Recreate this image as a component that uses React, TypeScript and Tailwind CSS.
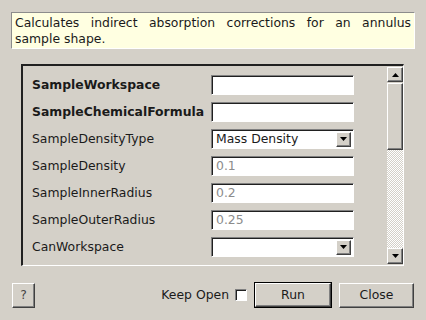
const raised =
  'border border-t-white border-l-white border-r-[#404040] border-b-[#404040] shadow-[inset_-1px_-1px_0_#808080] bg-[#d4d0c8]'
const sunken =
  'border border-t-[#808080] border-l-[#808080] border-r-white border-b-white shadow-[inset_1px_1px_0_#202020] bg-white'

type Row = {
  label: string
  bold?: boolean
  kind: 'text' | 'combo'
  value?: string
  muted?: boolean
}

const rows: Row[] = [
  { label: 'SampleWorkspace', bold: true, kind: 'text' },
  { label: 'SampleChemicalFormula', bold: true, kind: 'text' },
  { label: 'SampleDensityType', kind: 'combo', value: 'Mass Density' },
  { label: 'SampleDensity', kind: 'text', value: '0.1', muted: true },
  { label: 'SampleInnerRadius', kind: 'text', value: '0.2', muted: true },
  { label: 'SampleOuterRadius', kind: 'text', value: '0.25', muted: true },
  { label: 'CanWorkspace', kind: 'combo' },
]

function Arrow({ up }: { up?: boolean }) {
  return (
    <svg width="7" height="4" viewBox="0 0 7 4">
      <path d={up ? 'M0 4 L3.5 0 L7 4 Z' : 'M0 0 L7 0 L3.5 4 Z'} fill="#000" />
    </svg>
  )
}

function Field({ row }: { row: Row }) {
  if (row.kind === 'combo') {
    return (
      <div className={`${sunken} w-[143px] h-[20px] flex items-center pl-[4px] pr-[2px]`}>
        <span className="flex-1 leading-none">{row.value}</span>
        <div className={`${raised} w-[15px] h-[15px] flex items-center justify-center`}>
          <Arrow />
        </div>
      </div>
    )
  }
  return (
    <div className={`${sunken} w-[143px] h-[20px] flex items-center pl-[4px]`}>
      <span className={row.muted ? 'text-[#8c8c8c] leading-none' : 'leading-none'}>{row.value}</span>
    </div>
  )
}

export default function App() {
  return (
    <div
      className="w-[426px] h-[320px] bg-[#d4d0c8] pt-[12px] px-[11px] text-[12.4px] text-[#1a1a1a] overflow-hidden"
      style={{ fontFamily: '"DejaVu Sans", sans-serif' }}
    >
      <div className="h-[37px] border border-t-[#8c8c8c] border-l-[#8c8c8c] border-r-white border-b-white bg-[#ffffe1] px-[3px] pt-[2px] leading-[16px] text-justify">
        Calculates indirect absorption corrections for an annulus sample shape.
      </div>

      <div className="mt-[15px] ml-[10px] w-[383px] h-[202px] flex border-t-2 border-l-2 border-b border-r border-t-[#202020] border-l-[#202020] border-b-white border-r-white">
        <div className="flex-1 flex flex-col gap-[7px] pt-[9px] pl-[9px]">
          {rows.map((r) => (
            <div key={r.label} className="flex items-center h-[20px]">
              <span className={`w-[179px] ${r.bold ? 'font-bold' : ''}`}>{r.label}</span>
              <Field row={r} />
            </div>
          ))}
        </div>
        <div className="w-[16px] flex flex-col pt-[1px] pb-[1px]">
          <div className={`${raised} h-[15px] flex items-center justify-center`}>
            <Arrow up />
          </div>
          <div className={`${raised} h-[67px] mt-[1px]`} />
          <div className="flex-1 bg-[image:repeating-conic-gradient(#ffffff_0%_25%,#d4d0c8_0%_50%)] bg-[length:2px_2px]" />
          <div className={`${raised} h-[16px] flex items-center justify-center`}>
            <Arrow />
          </div>
        </div>
      </div>

      <div className="mt-[16px] flex items-center h-[26px]">
        <button className={`${raised} ml-[1px] w-[23px] h-[25px] flex items-center justify-center text-[#444]`}>?</button>
        <div className="flex-1" />
        <span>Keep Open</span>
        <div className={`${sunken} w-[12px] h-[12px] ml-[6px]`} />
        <div className="ml-[7px] border border-black">
          <button className={`${raised} w-[76px] h-[24px] flex items-center justify-center`}>Run</button>
        </div>
        <button className={`${raised} ml-[7px] mr-[1px] w-[75px] h-[25px] flex items-center justify-center`}>Close</button>
      </div>
    </div>
  )
}
